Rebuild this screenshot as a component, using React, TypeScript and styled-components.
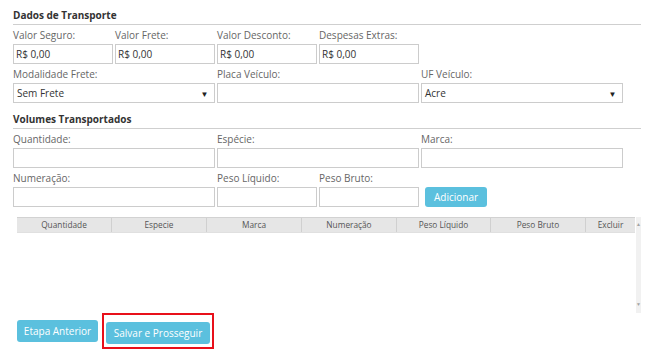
import React from "react";
import styled, { createGlobalStyle } from "styled-components";

const Global = createGlobalStyle`
  html, body {
    margin: 0;
    padding: 0;
    background: #fff;
    font-family: "Open Sans", "Liberation Sans", sans-serif;
  }
`;

const Page = styled.div`
  width: 654px;
  height: 356px;
  overflow: hidden;
  box-sizing: border-box;
  padding: 0 13px;
`;

const Heading = styled.h4<{ $top: number }>`
  margin: 0;
  padding: ${(p) => p.$top}px 0 3px;
  font-size: 10px;
  line-height: 12px;
  font-weight: 700;
  color: #333;
  border-bottom: 1px solid #cfcfcf;
`;

const Grid = styled.div`
  display: grid;
  grid-template-columns: repeat(6, 99.5px);
  column-gap: 2.5px;
  padding-top: 3px;
`;

const Field = styled.div<{ $span?: number }>`
  display: flex;
  flex-direction: column;
  grid-column: span ${(p) => p.$span || 1};
  margin-bottom: 3px;
`;

const Label = styled.label`
  font-size: 10px;
  line-height: 14px;
  height: 14px;
  color: #666;
  margin-bottom: 2px;
  white-space: nowrap;
`;

const Input = styled.input`
  box-sizing: border-box;
  height: 20px;
  width: 100%;
  border: 1px solid #ccc;
  background: #fff;
  padding: 0 2px;
  font-family: inherit;
  font-size: 10px;
  color: #333;
  outline: none;
`;

const SelectBox = styled.div`
  box-sizing: border-box;
  height: 20px;
  border: 1px solid #ccc;
  display: flex;
  align-items: center;
  justify-content: space-between;
  padding: 0 5px 0 3px;
  font-size: 10px;
  color: #333;
`;

const Caret = styled.span`
  font-size: 8px;
  color: #222;
`;

const Action = styled.div`
  grid-column: span 1;
  display: flex;
  align-items: flex-end;
  padding-left: 4px;
  margin-bottom: 3px;
`;

const Button = styled.button<{ $w: number; $h: number }>`
  width: ${(p) => p.$w}px;
  height: ${(p) => p.$h}px;
  border: none;
  border-radius: 3px;
  background: #5bc0de;
  color: #fff;
  font-family: inherit;
  font-size: 10px;
  padding: 0;
  cursor: pointer;
`;

const TableWrap = styled.div`
  display: flex;
  margin: 7px 0 0 4px;
  height: 96px;
`;

const TableArea = styled.div`
  width: 618px;
`;

const HeadRow = styled.div`
  display: grid;
  grid-template-columns: 95px 95px 95px 95px 94px 95px 49px;
  height: 14px;
  background: #e6e6e6;
  border-top: 1px solid #d2d2d2;
  border-bottom: 1px solid #e0e0e0;
`;

const HeadCell = styled.div`
  font-size: 8.3px;
  line-height: 13px;
  color: #555;
  text-align: center;
  border-right: 1px solid #d0d0d0;
  &:last-child {
    border-right: none;
  }
`;

const Scrollbar = styled.div`
  width: 15px;
  margin-left: 1px;
  background: #f1f1f1;
  display: flex;
  flex-direction: column;
  justify-content: space-between;
  align-items: center;
  padding: 5px 0 6px;
  box-sizing: border-box;
`;

const Arrow = styled.span`
  font-size: 5px;
  line-height: 5px;
  color: #a3a3a3;
`;

const Footer = styled.div`
  display: flex;
  align-items: flex-start;
  gap: 4px;
  margin-left: 4px;
`;

const Highlight = styled.div`
  border: 2px solid #e8101a;
  padding: 5px 2px 3px;
`;

const EtapaButton = styled(Button)`
  margin-top: 7px;
`;

const headers = [
  "Quantidade",
  "Especie",
  "Marca",
  "Numeração",
  "Peso Líquido",
  "Peso Bruto",
  "Excluir",
];

export default function App() {
  return (
    <>
      <Global />
      <Page>
        <Heading $top={9}>Dados de Transporte</Heading>
        <Grid>
          <Field>
            <Label>Valor Seguro:</Label>
            <Input defaultValue="R$ 0,00" />
          </Field>
          <Field>
            <Label>Valor Frete:</Label>
            <Input defaultValue="R$ 0,00" />
          </Field>
          <Field>
            <Label>Valor Desconto:</Label>
            <Input defaultValue="R$ 0,00" />
          </Field>
          <Field>
            <Label>Despesas Extras:</Label>
            <Input defaultValue="R$ 0,00" />
          </Field>
          <div style={{ gridColumn: "span 2" }} />
          <Field $span={2}>
            <Label>Modalidade Frete:</Label>
            <SelectBox>
              <span>Sem Frete</span>
              <Caret>▼</Caret>
            </SelectBox>
          </Field>
          <Field $span={2}>
            <Label>Placa Veículo:</Label>
            <Input />
          </Field>
          <Field $span={2}>
            <Label>UF Veículo:</Label>
            <SelectBox>
              <span>Acre</span>
              <Caret>▼</Caret>
            </SelectBox>
          </Field>
        </Grid>
        <Heading $top={7}>Volumes Transportados</Heading>
        <Grid>
          <Field $span={2}>
            <Label>Quantidade:</Label>
            <Input />
          </Field>
          <Field $span={2}>
            <Label>Espécie:</Label>
            <Input />
          </Field>
          <Field $span={2}>
            <Label>Marca:</Label>
            <Input />
          </Field>
          <Field $span={2}>
            <Label>Numeração:</Label>
            <Input />
          </Field>
          <Field>
            <Label>Peso Líquido:</Label>
            <Input />
          </Field>
          <Field>
            <Label>Peso Bruto:</Label>
            <Input />
          </Field>
          <Action>
            <Button $w={62} $h={20}>Adicionar</Button>
          </Action>
        </Grid>
        <TableWrap>
          <TableArea>
            <HeadRow>
              {headers.map((h) => (
                <HeadCell key={h}>{h}</HeadCell>
              ))}
            </HeadRow>
          </TableArea>
          <Scrollbar>
            <Arrow>▲</Arrow>
            <Arrow>▼</Arrow>
          </Scrollbar>
        </TableWrap>
        <Footer>
          <EtapaButton $w={81} $h={22}>Etapa Anterior</EtapaButton>
          <Highlight>
            <Button $w={104} $h={22}>Salvar e Prosseguir</Button>
          </Highlight>
        </Footer>
      </Page>
    </>
  );
}
